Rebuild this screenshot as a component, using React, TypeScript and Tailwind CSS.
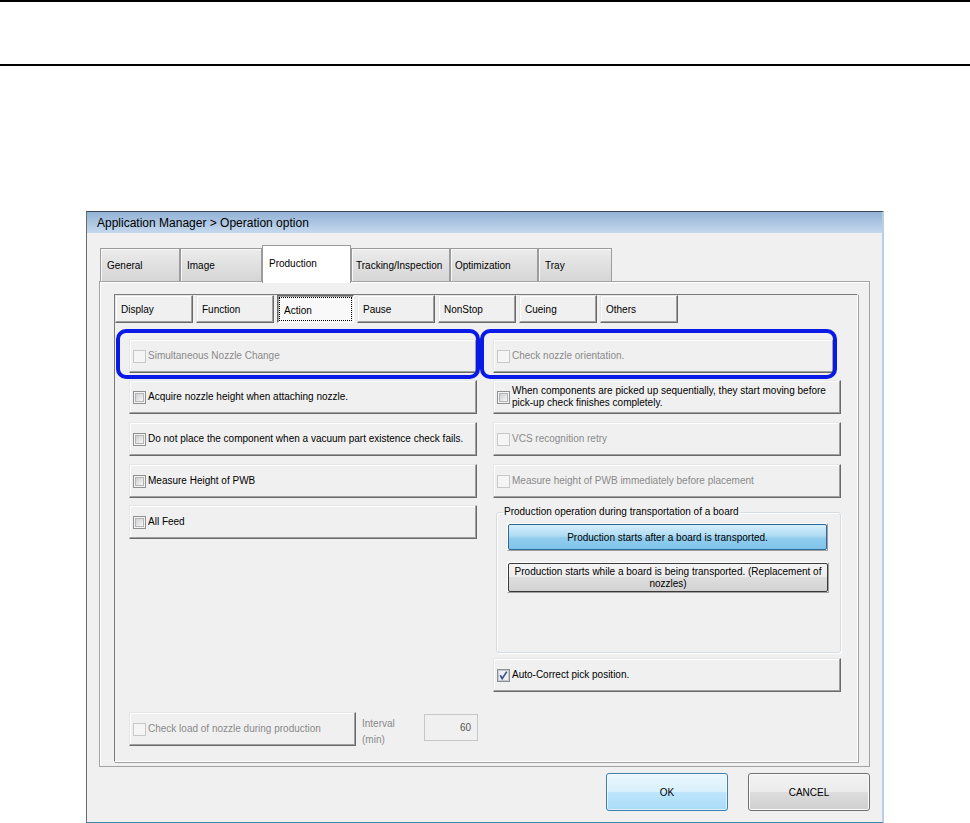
import React from "react";

const raised =
  "border border-t-[#e6e6e6] border-l-[#e6e6e6] border-r-[#6a6a6a] border-b-[#6a6a6a] shadow-[inset_-1px_-1px_0_#a0a0a0,inset_1px_1px_0_#ffffff]";

function Check({ checked = false, disabled = false }: { checked?: boolean; disabled?: boolean }) {
  return (
    <span
      className={`flex h-[13px] w-[13px] shrink-0 items-center justify-center border ${
        disabled ? "border-[#c8c8c8] bg-[#f5f5f5]" : "border-[#8e8f8f] bg-[#f4f4f4]"
      }`}
    >
      {checked ? (
        <svg width="11" height="11" viewBox="0 0 11 11">
          <rect x="0.5" y="0.5" width="10" height="10" fill="#eef0f4" stroke="#c5c9d2" />
          <path d="M2.2 5.2 L4.2 8.6 L8.8 1.6" fill="none" stroke="#3c5189" strokeWidth="1.7" />
        </svg>
      ) : disabled ? null : (
        <span className="h-[9px] w-[9px] border border-[#b2b4b8] bg-gradient-to-br from-[#cfcfcf] to-[#f7f7f7]" />
      )}
    </span>
  );
}

function Opt({
  label,
  checked,
  disabled,
  className = "",
}: {
  label: React.ReactNode;
  checked?: boolean;
  disabled?: boolean;
  className?: string;
}) {
  return (
    <div className={`flex h-[34px] shrink-0 items-center bg-[#f0f0f0] pl-[3px] ${raised} ${className}`}>
      <Check checked={checked} disabled={disabled} />
      <span
        className={`ml-[2px] whitespace-nowrap text-[10px] leading-[12px] ${
          disabled ? "text-[#8a8a8a]" : "text-black"
        }`}
      >
        {label}
      </span>
    </div>
  );
}

function MainTab({ label, w, pl = "pl-[6px]", selected }: { label: string; w: string; pl?: string; selected?: boolean }) {
  if (selected) {
    return (
      <div
        className={`relative z-10 -mb-[2px] flex h-[38px] ${w} shrink-0 items-center border border-b-0 border-[#9a9a9a] bg-white ${pl} pb-[2px] text-[10px] text-black`}
      >
        {label}
      </div>
    );
  }
  return (
    <div
      className={`flex h-[33px] ${w} shrink-0 items-center border border-b-0 border-[#9c9c9c] bg-gradient-to-b from-[#ececec] to-[#d5d5d5] ${pl} text-[10px] text-black shadow-[inset_1px_1px_0_#f8f8f8]`}
    >
      {label}
    </div>
  );
}

function SubTab({ label, pressed }: { label: string; pressed?: boolean }) {
  if (pressed) {
    return (
      <div className="h-[28px] w-[77px] shrink-0 border border-t-[#6a6a6a] border-l-[#6a6a6a] border-r-white border-b-white p-[1px] shadow-[inset_1px_1px_0_#a0a0a0]">
        <div className="flex h-full items-center border border-dotted border-black bg-[#f9f9f9] pl-[4px] pt-[2px] text-[10px] text-black">
          {label}
        </div>
      </div>
    );
  }
  return (
    <div className={`flex h-[28px] w-[78px] shrink-0 items-center bg-[#f0f0f0] pl-[5px] text-[10px] text-black ${raised}`}>
      {label}
    </div>
  );
}

export default function App() {
  return (
    <div className="relative h-[823px] w-[970px] overflow-hidden bg-white font-['Liberation_Sans',Arial,sans-serif]">
      <div className="h-[2px] bg-black" />
      <div className="h-[62px]" />
      <div className="h-[2px] bg-black" />
      <div className="h-[145px]" />

      {/* Dialog */}
      <div className="ml-[86px] flex h-[612px] w-[798px] flex-col border-l border-t border-r-2 border-b border-l-[#6b6b6b] border-t-[#3d4854] border-r-[#b8cfe6] border-b-[#3f8aa6] bg-[#f0f0f0]">
        <div className="flex h-[21px] shrink-0 items-center bg-gradient-to-b from-[#93b2d6] to-[#c5d9ee] pl-[10px] text-[12px] text-black">
          Application Manager &gt; Operation option
        </div>

        <div className="flex flex-1 flex-col pl-[12px] pt-[12px]">
          {/* main tabs */}
          <div className="flex h-[36px] items-end pl-[1px]">
            <MainTab label="General" w="w-[80px]" />
            <MainTab label="Image" w="w-[82px]" />
            <MainTab label="Production" w="w-[89px]" selected />
            <MainTab label="Tracking/Inspection" w="w-[99px]" pl="pl-[4px]" />
            <MainTab label="Optimization" w="w-[88px]" pl="pl-[4px]" />
            <MainTab label="Tray" w="w-[74px]" />
          </div>

          {/* tab panel */}
          <div className="h-[486px] w-[771px] border border-[#a3a3a3] bg-[#f0f0f0] pl-[14px] pt-[12px] shadow-[inset_1px_1px_0_#ffffff]">
            <div className="h-[468px] w-[744px] border border-t-[#7a7a7a] border-l-[#7a7a7a] border-r-[#ffffff] border-b-[#ffffff] shadow-[1px_1px_0_#a0a0a0]">
              {/* sub tabs */}
              <div className="flex gap-[3px]">
                <SubTab label="Display" />
                <SubTab label="Function" />
                <SubTab label="Action" pressed />
                <SubTab label="Pause" />
                <SubTab label="NonStop" />
                <SubTab label="Cueing" />
                <SubTab label="Others" />
              </div>

              {/* columns */}
              <div className="mt-[16px] flex h-[409px] gap-[16px] pl-[14px]">
                {/* left */}
                <div className="flex w-[348px] flex-col">
                  <Opt label="Simultaneous Nozzle Change" disabled />
                  <Opt className="mt-[7px]" label="Acquire nozzle height when attaching nozzle." />
                  <Opt className="mt-[8px]" label="Do not place the component when a vacuum part existence check fails." />
                  <Opt className="mt-[8px]" label="Measure Height of PWB" />
                  <Opt className="mt-[7px]" label="All Feed" />

                  <div className="mt-auto flex items-start">
                    <Opt className="w-[227px]" label="Check load of nozzle during production" disabled />
                    <div className="ml-[6px] w-[62px] shrink-0 pt-[4px] text-[10px] leading-[16px] text-[#8a8a8a]">
                      Interval
                      <br />
                      (min)
                    </div>
                    <div className="mt-[2px] flex h-[27px] w-[54px] shrink-0 items-center justify-end border border-[#c6c6c6] bg-[#f0f0f0] pr-[6px] text-[10px] text-[#555555]">
                      60
                    </div>
                  </div>
                </div>

                {/* right */}
                <div className="flex w-[348px] flex-col">
                  <Opt className="w-[341px]" label="Check nozzle orientation." disabled />
                  <Opt
                    className="mt-[7px]"
                    label={
                      <>
                        When components are picked up sequentially, they start moving before
                        <br />
                        pick-up check finishes completely.
                      </>
                    }
                  />
                  <Opt className="mt-[8px]" label="VCS recognition retry" disabled />
                  <Opt className="mt-[8px]" label="Measure height of PWB  immediately before placement" disabled />

                  <fieldset className="ml-[3px] mt-[8px] h-[147px] w-[345px] rounded-[3px] border border-[#d5dde3] px-[10px] shadow-[inset_1px_1px_0_#ffffff,1px_1px_0_#ffffff]">
                    <legend className="ml-[-4px] px-[1px] text-[10px] leading-[12px] text-black">
                      Production operation during transportation of a board
                    </legend>
                    <div className="mt-[5px] w-[321px] border border-t-white border-l-white border-r-[#a0a0a0] border-b-[#a0a0a0]">
                      <div className="flex h-[26px] items-center justify-center rounded-[2px] border border-[#2f6a96] bg-[linear-gradient(#d6eefa_0%,#afdcf3_45%,#92cdee_55%,#7fc3ea_100%)] text-[10px] text-black">
                        Production starts after a board is transported.
                      </div>
                    </div>
                    <div className="mt-[11px] w-[322px] border border-t-white border-l-white border-r-[#a0a0a0] border-b-[#a0a0a0]">
                      <div className="flex h-[29px] flex-col items-center justify-center rounded-[2px] border border-[#3a3a3a] bg-[linear-gradient(#f4f4f4_0%,#ececec_50%,#dedede_50%,#d2d2d2_100%)] text-center text-[10px] leading-[12px] text-black">
                        <span>Production starts while a board is being transported. (Replacement of</span>
                        <span>nozzles)</span>
                      </div>
                    </div>
                  </fieldset>

                  <Opt className="mt-[5px]" label="Auto-Correct pick position." checked />
                </div>
              </div>
            </div>
          </div>

          {/* OK / CANCEL */}
          <div className="mt-[6px] flex w-[771px] justify-end gap-[20px]">
            <div className="flex h-[38px] w-[122px] items-center justify-center rounded-[3px] border border-[#3c7fb1] bg-[linear-gradient(#eaf6fd_0%,#d9f0fc_50%,#bee6fd_50%,#a9dbf6_100%)] text-[10px] text-black shadow-[inset_0_0_0_1px_#ffffffa0]">
              OK
            </div>
            <div className="flex h-[38px] w-[122px] items-center justify-center rounded-[3px] border border-[#707070] bg-[linear-gradient(#f2f2f2_0%,#ebebeb_50%,#dddddd_50%,#cfcfcf_100%)] text-[10px] text-black shadow-[inset_0_0_0_1px_#fcfcfc]">
              CANCEL
            </div>
          </div>
        </div>
      </div>

      {/* annotation highlights */}
      <div className="absolute left-[116px] top-[329px] h-[50px] w-[364px] rounded-[10px] border-[4px] border-[#0a1ae6]" />
      <div className="absolute left-[480px] top-[329px] h-[50px] w-[357px] rounded-[10px] border-[4px] border-[#0a1ae6]" />
    </div>
  );
}
